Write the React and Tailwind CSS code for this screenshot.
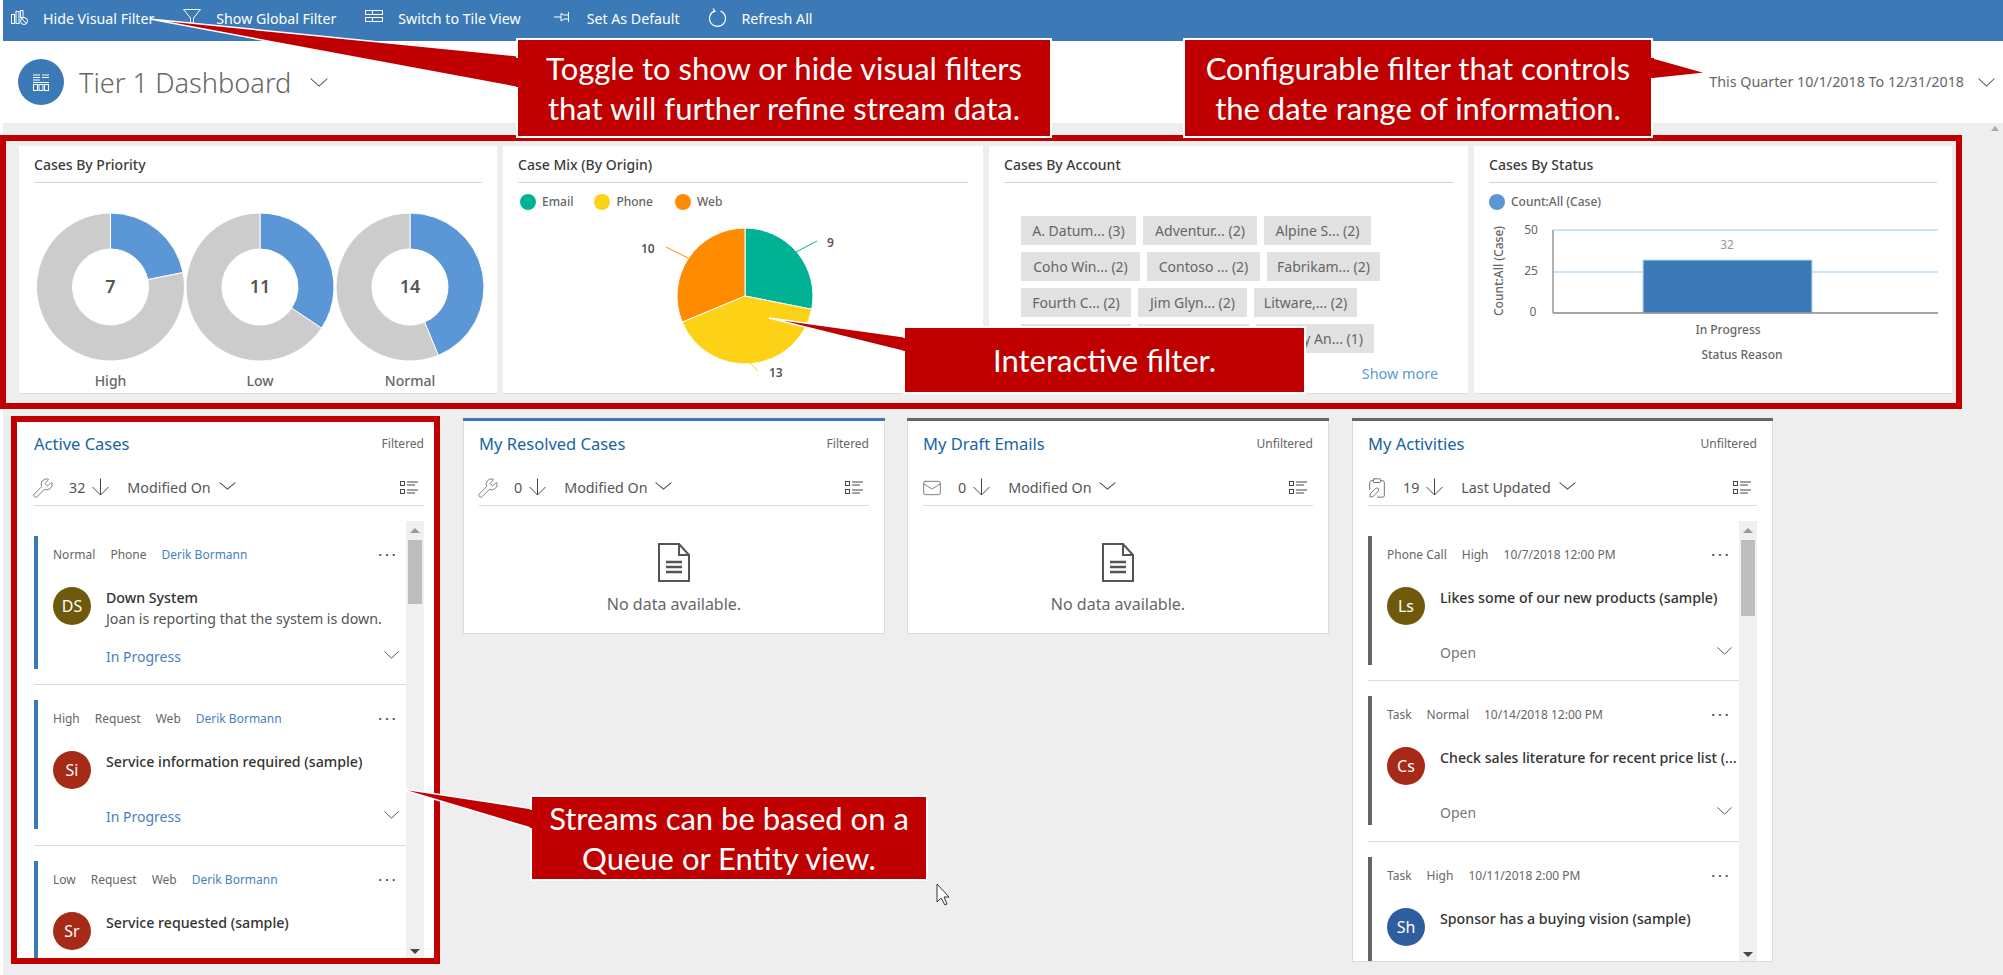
import React from 'react';
import { ClipboardPen, Mail, Wrench } from 'lucide-react';

const toolbarItems = [
  { label: 'Hide Visual Filter', icon: 'bars', gap: 'ml-[8px]', lift: '-mt-[2px]' },
  { label: 'Show Global Filter', icon: 'funnel', gap: 'ml-[29px]', lift: '-mt-[4px]' },
  { label: 'Switch to Tile View', icon: 'tile', gap: 'ml-[29px]', lift: '-mt-[5px]' },
  { label: 'Set As Default', icon: 'pin', gap: 'ml-[33px]', lift: '-mt-[3px]' },
  { label: 'Refresh All', icon: 'refresh', gap: 'ml-[29px]', lift: '-mt-[3px]' },
];

function ToolbarIcon({ name, className }) {
  if (name === 'bars') {
    return (
      <svg className={className} width="17" height="15" viewBox="0 0 17 15" fill="none" stroke="#fff" strokeWidth="1">
        <rect x="0.5" y="4.5" width="3" height="9" />
        <rect x="5" y="1.5" width="3" height="12" />
        <rect x="9.5" y="0.5" width="2.5" height="7" />
        <circle cx="13" cy="11" r="3.5" />
        <path d="M10.5 8.5l5 5" />
      </svg>
    );
  }
  if (name === 'funnel') {
    return (
      <svg className={className} width="18" height="16" viewBox="0 0 18 16" fill="none" stroke="#fff" strokeWidth="1">
        <path d="M0.5 0.5h17L10.5 9v6.5h-3V9z" />
      </svg>
    );
  }
  if (name === 'tile') {
    return (
      <svg className={className} width="18" height="12" viewBox="0 0 18 12" fill="none" stroke="#fff" strokeWidth="1">
        <rect x="0.5" y="0.5" width="7" height="4" />
        <rect x="7.5" y="0.5" width="10" height="4" />
        <rect x="0.5" y="7.5" width="7" height="4" />
        <rect x="7.5" y="7.5" width="10" height="4" />
      </svg>
    );
  }
  if (name === 'pin') {
    return (
      <svg className={className} width="18" height="10" viewBox="0 0 18 10" fill="none" stroke="#fff" strokeWidth="1">
        <path d="M0 5h7M7 1.5l3 1.5h4.5V0.5M14.5 0v10M14.5 7H10l-3 2V1.5" />
      </svg>
    );
  }
  return (
    <svg className={className} width="18" height="19" viewBox="0 0 18 19" fill="none" stroke="#fff" strokeWidth="1.2">
      <path d="M11.5 3a8 8 0 1 1-6 0" />
      <path d="M4 0.5l2 3-3.5 1" />
    </svg>
  );
}

function Chevron({ className }) {
  return (
    <svg className={className} viewBox="0 0 16 9" fill="none" stroke="currentColor" strokeWidth="1" preserveAspectRatio="none">
      <path d="M0.5 0.5L8 8l7.5-7.5" />
    </svg>
  );
}

function SortArrow() {
  return (
    <svg className="ml-[7px] -mt-[2px] text-[#444]" width="17" height="18" viewBox="0 0 17 18" fill="none" stroke="currentColor" strokeWidth="1">
      <path d="M8.5 0.5V17M0.5 9l8 8 8-8" />
    </svg>
  );
}

function ListIcon() {
  return (
    <svg className="ml-auto mr-[6px] text-[#444]" width="18" height="14" viewBox="0 0 18 14" fill="none" stroke="currentColor" strokeWidth="1">
      <rect x="0.5" y="0.5" width="4" height="4" />
      <rect x="0.5" y="8.5" width="4" height="4" />
      <path d="M7 1h11M7 4h8M7 9h11M7 12h8" />
    </svg>
  );
}

function DocIcon() {
  return (
    <svg width="32" height="39" viewBox="0 0 32 39" fill="none" stroke="#555" strokeWidth="2">
      <path d="M1 1h20l10 11v26H1z" />
      <path d="M21 1v11h10" />
      <path d="M8 19h16M8 24h16M8 29h16" strokeWidth="2.4" />
    </svg>
  );
}

function slicePath(cx, cy, r, inner, from, to) {
  const pt = (rad, a) => [cx + rad * Math.sin(a * 2 * Math.PI), cy - rad * Math.cos(a * 2 * Math.PI)];
  const large = to - from > 0.5 ? 1 : 0;
  const [x1, y1] = pt(r, from);
  const [x2, y2] = pt(r, to);
  if (!inner) return `M${cx} ${cy}L${x1} ${y1}A${r} ${r} 0 ${large} 1 ${x2} ${y2}Z`;
  const [x3, y3] = pt(inner, to);
  const [x4, y4] = pt(inner, from);
  return `M${x1} ${y1}A${r} ${r} 0 ${large} 1 ${x2} ${y2}L${x3} ${y3}A${inner} ${inner} 0 ${large} 0 ${x4} ${y4}Z`;
}

function Donut({ cx, value, label }) {
  const share = value / 32;
  return (
    <g>
      <path d={slicePath(cx, 288, 74, 38, 0, share)} fill="#5b96d6" stroke="#fff" strokeWidth="1" />
      <path d={slicePath(cx, 288, 74, 38, share, 0.99999)} fill="#cccccc" stroke="#fff" strokeWidth="1" />
      <text x={cx} y="294" textAnchor="middle" className="fill-[#555] text-[18px] font-semibold">{value}</text>
      <text x={cx} y="387" textAnchor="middle" className="fill-[#666] text-[14px] font-medium">{label}</text>
    </g>
  );
}

function FilterCard({ title, className, children }) {
  return (
    <div className={`h-[248px] shrink-0 bg-white border-b border-[#dedede] ${className}`}>
      <div className="mx-[15px] h-[37px] flex items-center pt-[1px] border-b border-[#d4d4d4] text-[14px] font-medium text-[#3c3c3c]">{title}</div>
      {children}
    </div>
  );
}

function LegendDot({ color, label, className }) {
  return (
    <div className={`flex items-center gap-[6px] text-[12px] font-medium text-[#666] ${className}`}>
      <span className={`w-4 h-4 rounded-full ${color}`} />
      {label}
    </div>
  );
}

const chipRows = [
  [
    { text: 'A. Datum... (3)', w: 'w-[115px]' },
    { text: 'Adventur... (2)', w: 'w-[114px]' },
    { text: 'Alpine S... (2)', w: 'w-[107px]' },
  ],
  [
    { text: 'Coho Win... (2)', w: 'w-[119px]' },
    { text: 'Contoso ... (2)', w: 'w-[113px]' },
    { text: 'Fabrikam... (2)', w: 'w-[113px]' },
  ],
  [
    { text: 'Fourth C... (2)', w: 'w-[110px]' },
    { text: 'Jim Glyn... (2)', w: 'w-[109px]' },
    { text: 'Litware,... (2)', w: 'w-[103px]' },
  ],
  [
    { text: '', w: 'w-[110px]' },
    { text: '', w: 'w-[111px]' },
    { text: 'Trey An... (1)', w: 'w-[118px]', end: true },
  ],
];

function StreamHeader({ title, filter, icon, count, sort }) {
  return (
    <>
      <div className="flex items-center justify-between h-6">
        <span className="text-[16.5px] text-[#17659f]">{title}</span>
        <span className="text-[12px] text-[#666]">{filter}</span>
      </div>
      <div className="mt-[20px] flex items-center h-6 text-[#555]">
        <span className="w-[18px] flex justify-center text-[#666]">{icon}</span>
        <span className="ml-[17px] text-[14.3px]">{count}</span>
        <SortArrow />
        <span className="ml-[18px] text-[14.3px]">{sort}</span>
        <Chevron className="ml-[8px] w-[17px] h-2 -mt-1 text-[#444]" />
        <ListIcon />
      </div>
      <div className="mt-[5px] h-px bg-[#dcdcdc]" />
    </>
  );
}

function StreamItem({ bar, meta, link, initials, avatar, title, body, status, statusColor }) {
  return (
    <div className="flex min-h-[129px]">
      <div className={`w-[4px] shrink-0 ${bar}`} />
      <div className="flex-1 min-w-0 pl-[15px] pr-[7px] pt-[9px] pb-px">
        <div className="flex items-center h-5 text-[12px] text-[#666]">
          <div className="flex gap-[15px]">
            {meta.map((m) => (
              <span key={m}>{m}</span>
            ))}
            {link && <span className="text-[#4a80c0]">{link}</span>}
          </div>
          <span className="ml-auto -mt-[6px] tracking-[3.5px] font-bold text-[12px] leading-none text-[#444]">...</span>
        </div>
        <div className="mt-[22px] flex items-start">
          <div className={`w-[38px] h-[38px] rounded-full shrink-0 flex items-center justify-center text-white text-[16px] ${avatar}`}>{initials}</div>
          <div className="ml-[15px] min-w-0 pt-[1px]">
            <div className="h-5 leading-5 text-[14.2px] font-medium text-[#333] whitespace-nowrap">{title}</div>
            {body && <div className="mt-px h-5 leading-5 text-[14.2px] text-[#555] whitespace-nowrap">{body}</div>}
          </div>
        </div>
        {status && (
          <div className={`mt-[19px] flex items-center h-5 pb-[3px] pl-[53px] text-[14px] ${statusColor}`}>
            {status}
            <Chevron className="ml-auto w-[15px] h-2 -mt-1 text-[#444]" />
          </div>
        )}
      </div>
    </div>
  );
}

function ScrollTrack({ thumb }) {
  return (
    <div className="relative w-[18px] shrink-0 bg-[#f0f0f0]">
      <div className="mx-auto mt-[7px] w-0 h-0 border-x-[5px] border-x-transparent border-b-[5px] border-b-[#999]" />
      <div className={`mx-[2px] mt-[7px] bg-[#bdbdbd] ${thumb}`} />
      <div className="absolute bottom-[4px] left-[4px] w-0 h-0 border-x-[5px] border-x-transparent border-t-[5px] border-t-[#444]" />
    </div>
  );
}

function EmptyBody() {
  return (
    <div className="flex flex-col items-center pt-[37px]">
      <DocIcon />
      <div className="mt-[12px] text-[16px] leading-5 text-[#666]">No data available.</div>
    </div>
  );
}

const wrench = <Wrench size={22} strokeWidth={0.9} className="shrink-0" />;

const caseItems = [
  {
    meta: ['Normal', 'Phone'], link: 'Derik Bormann', initials: 'DS', avatar: 'bg-[#6f5a0c]',
    title: 'Down System', body: 'Joan is reporting that the system is down.', status: 'In Progress',
  },
  {
    meta: ['High', 'Request', 'Web'], link: 'Derik Bormann', initials: 'Si', avatar: 'bg-[#a52a17]',
    title: 'Service information required (sample)', status: 'In Progress',
  },
  {
    meta: ['Low', 'Request', 'Web'], link: 'Derik Bormann', initials: 'Sr', avatar: 'bg-[#a52a17]',
    title: 'Service requested (sample)',
  },
];

const activityItems = [
  {
    meta: ['Phone Call', 'High', '10/7/2018 12:00 PM'], initials: 'Ls', avatar: 'bg-[#6f5a0c]',
    title: 'Likes some of our new products (sample)', status: 'Open',
  },
  {
    meta: ['Task', 'Normal', '10/14/2018 12:00 PM'], initials: 'Cs', avatar: 'bg-[#a52a17]',
    title: 'Check sales literature for recent price list (...', status: 'Open',
  },
  {
    meta: ['Task', 'High', '10/11/2018 2:00 PM'], initials: 'Sh', avatar: 'bg-[#2f5da0]',
    title: 'Sponsor has a buying vision (sample)',
  },
];

function ItemList({ items, bar, statusColor, height, thumb }) {
  return (
    <div className={`mt-[15px] flex overflow-hidden ${height}`}>
      <div className="flex-1 min-w-0 pt-[15px]">
        {items.map((item, i) => (
          <div key={item.title}>
            {i > 0 && <div className={`mb-[15px] h-px bg-[#dcdcdc] ${i === 1 ? 'mt-[15px]' : 'mt-[16px]'}`} />}
            <StreamItem {...item} bar={bar} statusColor={statusColor} />
          </div>
        ))}
      </div>
      <ScrollTrack thumb={thumb} />
    </div>
  );
}

function Callout({ className, children }) {
  return (
    <div className={`absolute flex items-center justify-center text-center bg-[#c00000] border-2 border-white text-white text-[31px] leading-[40px] font-['Lato',sans-serif] ${className}`}>
      <div>{children}</div>
    </div>
  );
}

export default function App() {
  return (
    <div className="relative w-[2003px] h-[975px] overflow-hidden bg-white font-['Noto_Sans',sans-serif]">
      <div className="ml-[3px] h-[41px] pb-[3px] flex items-center bg-[#3c7ab7] text-white text-[14.2px]">
        {toolbarItems.map((item) => (
          <div key={item.label} className={`flex items-center gap-[15px] ${item.gap}`}>
            <ToolbarIcon name={item.icon} className={item.lift} />
            <span>{item.label}</span>
          </div>
        ))}
      </div>

      <div className="h-[82px] flex items-center">
        <div className="ml-[18px] w-[46px] h-[46px] rounded-full bg-[#3c7ab7] flex items-center justify-center">
          <svg width="16" height="17" viewBox="0 0 16 17" fill="none" stroke="#fff" strokeWidth="1">
            <path d="M0 1h7M0 3.5h7M0 6h7M9 1h7M9 3.5h7M0 8.5h16" />
            <rect x="0.5" y="10.5" width="4" height="6" />
            <rect x="6" y="10.5" width="4" height="6" />
            <rect x="11.5" y="10.5" width="4" height="6" />
          </svg>
        </div>
        <span className="ml-[15px] mt-[2px] text-[27.2px] font-light text-[#666]">Tier 1 Dashboard</span>
        <Chevron className="ml-[19px] w-[18px] h-[9px] text-[#555]" />
        <span className="ml-auto text-[14.3px] text-[#666]">This Quarter 10/1/2018 To 12/31/2018</span>
        <Chevron className="ml-[14px] mr-[8px] w-[17px] h-[9px] text-[#555]" />
      </div>

      <div className="ml-[3px] h-[852px] bg-[#eeeeee] pt-[12px]">
        <div className="-ml-[3px] w-[1962px] h-[274px] border-[6px] border-[#c00000] bg-[#eeeeee] pl-[13px] pt-[5px] flex gap-[6px]">
          <FilterCard title="Cases By Priority" className="w-[478px]">
            <svg width="478" height="210" viewBox="19 184 478 210">
              <Donut cx={110.5} value={7} label="High" />
              <Donut cx={260} value={11} label="Low" />
              <Donut cx={410} value={14} label="Normal" />
            </svg>
          </FilterCard>

          <FilterCard title="Case Mix (By Origin)" className="w-[480px]">
            <div className="ml-[17px] mt-[11px] flex h-4">
              <LegendDot color="bg-[#00b294]" label="Email" />
              <LegendDot color="bg-[#fcd116]" label="Phone" className="ml-[21px]" />
              <LegendDot color="bg-[#ff8c00]" label="Web" className="ml-[22px]" />
            </div>
            <svg width="480" height="183" viewBox="503 211 480 183">
              <path d={slicePath(745, 297, 68, 0, 0, 9 / 32)} fill="#00b294" stroke="#fff" strokeWidth="1" />
              <path d={slicePath(745, 297, 68, 0, 9 / 32, 22 / 32)} fill="#fcd116" stroke="#fff" strokeWidth="1" />
              <path d={slicePath(745, 297, 68, 0, 22 / 32, 1)} fill="#ff8c00" stroke="#fff" strokeWidth="1" />
              <path d="M796 253L817 242" stroke="#00b294" />
              <path d="M688 259L666 248" stroke="#ff8c00" />
              <path d="M750 364L758 372" stroke="#fcd116" />
              <g className="fill-[#555] text-[12px] font-semibold">
                <text x="827" y="248">9</text>
                <text x="641" y="254">10</text>
                <text x="769" y="378">13</text>
              </g>
            </svg>
          </FilterCard>

          <FilterCard title="Cases By Account" className="w-[479px]">
            <div className="pl-[32px] pt-[33px] flex flex-col gap-[7px]">
              {chipRows.map((row, i) => (
                <div key={i} className="flex gap-[7px]">
                  {row.map((chip, j) => (
                    <div key={j} className={`h-[29px] bg-[#e1e1e1] flex items-center text-[14px] text-[#666] ${chip.w} ${chip.end ? 'justify-end pr-[11px]' : 'justify-center'}`}>
                      {chip.text}
                    </div>
                  ))}
                </div>
              ))}
            </div>
            <div className="mt-[11px] pr-[30px] h-5 leading-5 text-right text-[14.4px] text-[#5b9bd5]">Show more</div>
          </FilterCard>

          <FilterCard title="Cases By Status" className="w-[478px]">
            <div className="ml-[15px] mt-[11px] flex h-4">
              <LegendDot color="bg-[#5b96d6]" label="Count:All (Case)" />
            </div>
            <svg width="478" height="183" viewBox="1474 211 478 183">
              <path d="M1553 231H1938M1553 273H1938" stroke="#bcdcf5" strokeWidth="1.5" />
              <path d="M1553 231V314" stroke="#666" />
              <rect x="1643" y="261" width="169" height="53" fill="#3c7ab7" stroke="#bcdcf5" strokeWidth="1" />
              <path d="M1553 314H1938" stroke="#888" strokeWidth="1.5" />
              <g className="fill-[#666] text-[12px]" textAnchor="middle">
                <text x="1531" y="235">50</text>
                <text x="1531" y="276">25</text>
                <text x="1533" y="317">0</text>
              </g>
              <text x="1727" y="250" textAnchor="middle" className="fill-[#999] text-[12px]">32</text>
              <text x="1728" y="335" textAnchor="middle" className="fill-[#666] text-[12px] font-medium">In Progress</text>
              <text x="1742" y="360" textAnchor="middle" className="fill-[#666] text-[12px] font-medium">Status Reason</text>
              <text transform="translate(1503 272) rotate(-90)" textAnchor="middle" className="fill-[#666] text-[12px] font-medium">Count:All (Case)</text>
            </svg>
          </FilterCard>
        </div>

        <div className="mt-[7px] flex items-start">
          <div className="ml-[8px] w-[429px] h-[548px] border-[6px] border-[#c00000] bg-white shrink-0">
            <div className="pl-[17px] pr-[10px] pt-[10px]">
              <StreamHeader title="Active Cases" filter="Filtered" icon={wrench} count="32" sort="Modified On" />
              <ItemList items={caseItems} bar="bg-[#3c7ab7]" statusColor="text-[#4a80c0]" height="h-[437px]" thumb="h-[64px]" />
            </div>
          </div>

          <div className="ml-[23px] mt-[2px] w-[422px] h-[216px] bg-white border border-t-0 border-[#dcdcdc] shrink-0">
            <div className="-mx-px h-[3px] bg-[#3c7ab7]" />
            <div className="px-[15px] pt-[11px]">
              <StreamHeader title="My Resolved Cases" filter="Filtered" icon={wrench} count="0" sort="Modified On" />
              <EmptyBody />
            </div>
          </div>

          <div className="ml-[22px] mt-[2px] w-[422px] h-[216px] bg-white border border-t-0 border-[#dcdcdc] shrink-0">
            <div className="-mx-px h-[3px] bg-[#666]" />
            <div className="px-[15px] pt-[11px]">
              <StreamHeader title="My Draft Emails" filter="Unfiltered" icon={<Mail size={20} strokeWidth={1} className="shrink-0" />} count="0" sort="Modified On" />
              <EmptyBody />
            </div>
          </div>

          <div className="ml-[23px] mt-[2px] w-[421px] h-[544px] bg-white border border-t-0 border-[#dcdcdc] shrink-0">
            <div className="-mx-px h-[3px] bg-[#666]" />
            <div className="px-[15px] pt-[11px]">
              <StreamHeader title="My Activities" filter="Unfiltered" icon={<ClipboardPen size={22} strokeWidth={1} className="shrink-0" />} count="19" sort="Last Updated" />
              <ItemList items={activityItems} bar="bg-[#666]" statusColor="text-[#777]" height="h-[440px]" thumb="h-[76px]" />
            </div>
          </div>
        </div>
      </div>

      <div className="absolute right-[4px] top-[126px] w-0 h-0 border-x-[4px] border-x-transparent border-b-[5px] border-b-[#aaa]" />

      {/* callout tails sit over the whole page */}
      <svg className="absolute inset-0 pointer-events-none" width="2003" height="975" viewBox="0 0 2003 975">
        <g fill="#c00000" stroke="#fff" strokeWidth="1.5">
          <path d="M150 19L520 56V88Z" />
          <path d="M1650 57L1707 73L1650 79Z" />
          <path d="M769 318L906 337V352Z" />
          <path d="M397 788L534 809V829Z" />
        </g>
        <path d="M937 884V902L941 898L945 905L947 904L944 897H949Z" fill="#fff" stroke="#333" strokeWidth="1" />
      </svg>

      <Callout className="left-[516px] top-[38px] w-[536px] h-[100px]">
        Toggle to show or hide visual filters
        <br />
        that will further refine stream data.
      </Callout>
      <Callout className="left-[1183px] top-[38px] w-[470px] h-[100px]">
        Configurable filter that controls
        <br />
        the date range of information.
      </Callout>
      <Callout className="left-[903px] top-[326px] w-[403px] h-[68px]">Interactive filter.</Callout>
      <Callout className="left-[530px] top-[795px] w-[398px] h-[86px]">
        Streams can be based on a
        <br />
        Queue or Entity view.
      </Callout>

      {/* tail runs into the box, no white edge between them */}
      <svg className="absolute inset-0 pointer-events-none" width="2003" height="975" viewBox="0 0 2003 975" fill="#c00000">
        <rect x="516" y="58" width="3" height="29" />
        <rect x="1650" y="58" width="4" height="20" />
        <rect x="903" y="338" width="3" height="13" />
        <rect x="530" y="810" width="3" height="18" />
      </svg>
    </div>
  );
}
